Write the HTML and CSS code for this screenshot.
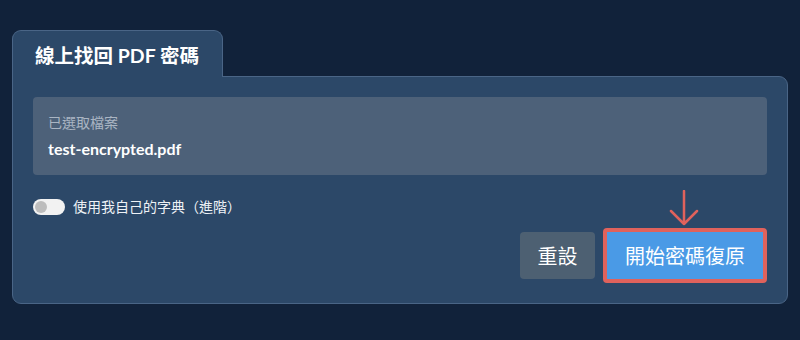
FILE: index.html
```html
<!DOCTYPE html>
<html lang="zh-TW">
<head>
    <meta charset="UTF-8">
    <meta name="viewport" content="width=device-width, initial-scale=1.0">
    <title>線上找回 PDF 密碼</title>
    <link rel="stylesheet" href="styles.css">
</head>
<body>
    <div class="container">
        <div class="tab">線上找回 PDF 密碼</div>
        <div class="panel">
            <!-- 已選取的檔案 -->
            <div class="file-box">
                <div class="file-label">已選取檔案</div>
                <div class="file-name">test-encrypted.pdf</div>
            </div>

            <!-- 自訂字典開關 -->
            <label class="option">
                <span class="switch"><span class="knob"></span></span>
                <span>使用我自己的字典（進階）</span>
            </label>

            <div class="actions">
                <button class="btn btn-reset">重設</button>
                <div class="start-wrap">
                    <svg class="hint-arrow" width="30" height="36" viewBox="0 0 30 36">
                        <path d="M15 1 V34 M2 21 L15 34 L28 21" fill="none" stroke="#e0625c" stroke-width="2.5" stroke-linecap="round" stroke-linejoin="round"/>
                    </svg>
                    <button class="btn btn-start">開始密碼復原</button>
                </div>
            </div>
        </div>
    </div>
</body>
</html>
```

FILE: styles.css
```css
body {
    margin: 0;
    background-color: #11223a;
    font-family: Lato, "Noto Sans CJK TC", sans-serif;
    color: #fff;
}
.container {
    padding: 30px 12px 0 12px;
}
.tab {
    position: relative;
    z-index: 1;
    display: inline-block;
    box-sizing: border-box;
    width: 211px;
    height: 47px;
    margin-bottom: -1px;
    padding: 12px 0 0 22px;
    background-color: #2c4868;
    border: 1px solid #4a6586;
    border-bottom: none;
    border-radius: 9px 9px 0 0;
    font-size: 19.5px;
    font-weight: 700;
    line-height: 26px;
}
.panel {
    background-color: #2c4868;
    border: 1px solid #4a6586;
    border-radius: 0 9px 9px 9px;
    padding: 20px;
}
.file-box {
    background-color: #4d6179;
    border-radius: 4px;
    padding: 16px 15px;
}
.file-label {
    font-size: 14px;
    line-height: 20px;
    color: #aab5c3;
}
.file-name {
    margin-top: 6px;
    font-size: 16px;
    font-weight: 700;
    line-height: 20px;
}
.option {
    display: flex;
    align-items: center;
    gap: 8px;
    margin-top: 24px;
    font-size: 14px;
    line-height: 16px;
    color: #eef2f6;
}
.switch {
    position: relative;
    width: 32px;
    height: 16px;
    border-radius: 8px;
    background-color: #f2f2f2;
}
.knob {
    position: absolute;
    left: 2px;
    top: 2px;
    width: 12px;
    height: 12px;
    border-radius: 50%;
    background-color: #bdbdbd;
}
.actions {
    display: flex;
    justify-content: flex-end;
    align-items: center;
    gap: 8px;
    margin-top: 13px;
}
.btn {
    box-sizing: border-box;
    height: 47px;
    border: none;
    border-radius: 4px;
    font-family: Lato, "Noto Sans CJK TC", sans-serif;
    font-size: 20px;
    color: #fff;
}
.btn-reset {
    width: 75px;
    background-color: #4d6072;
}
.start-wrap {
    position: relative;
    display: flex;
}
.btn-start {
    width: 164px;
    height: 55px;
    background-color: #4a9ae6;
    border: 4px solid #e0625c;
    border-radius: 4px;
}
.hint-arrow {
    position: absolute;
    left: 66px;
    top: -38px;
}
```
